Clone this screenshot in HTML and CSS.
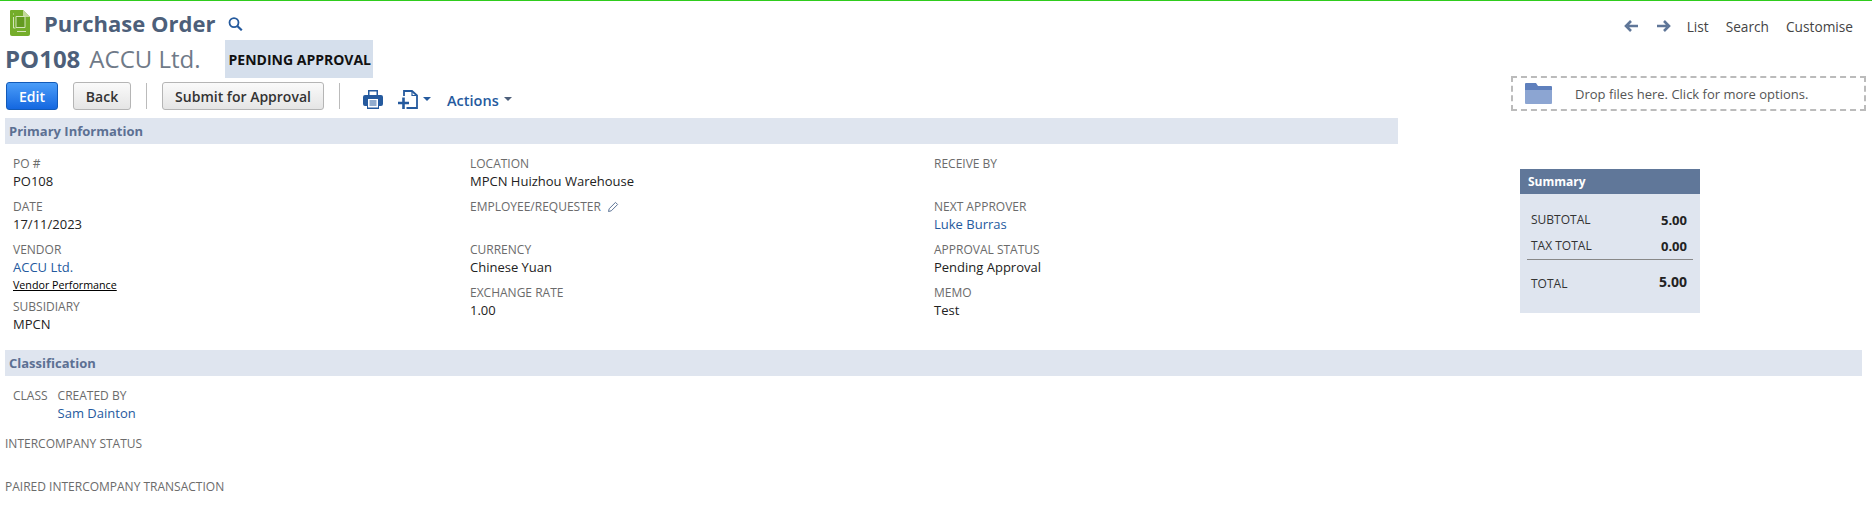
FILE: index.html
```html
<!DOCTYPE html>
<html lang="en">
<head>
  <meta charset="UTF-8">
  <title>Purchase Order</title>
  <link rel="stylesheet" href="styles.css">
</head>
<body>
  <div class="top">
    <div class="top-left">
      <div class="title-row">
        <svg class="record-icon" width="20" height="26" viewBox="0 0 20 26">
          <path d="M1 0h12l7 7v17a2 2 0 0 1-2 2H2a2 2 0 0 1-2-2V1a1 1 0 0 1 1-1z" fill="#74ad2a"/>
          <path d="M13 0l7 7h-7z" fill="#c3d99c"/>
          <path d="M6 6.500h9v11H6z" fill="#639a20" stroke="#d5e5bb" stroke-width="1"/>
          <path d="M3.500 7v11h2M7 21.500h9M3 4h1" stroke="#d5e5bb" stroke-width="1" fill="none"/>
        </svg>
        <h1 class="page-title">Purchase Order</h1>
        <svg class="search-icon" width="15" height="14" viewBox="0 0 15 14">
          <circle cx="6" cy="5.600" r="4.500" fill="none" stroke="#255a9e" stroke-width="1.800"/>
          <path d="M9.300 9l4.500 4.300" stroke="#255a9e" stroke-width="2.200"/>
        </svg>
      </div>
      <div class="record-row">
        <span class="record-id">PO108</span>
        <span class="record-name">ACCU Ltd.</span>
        <span class="badge">PENDING APPROVAL</span>
      </div>
      <div class="toolbar">
        <button class="btn btn-primary">Edit</button>
        <button class="btn btn-back">Back</button>
        <span class="sep"></span>
        <button class="btn btn-submit">Submit for Approval</button>
        <span class="sep"></span>
        <svg class="print-icon" width="20" height="19" viewBox="0 0 20 19">
          <path d="M5 0h10v5h3a2 2 0 0 1 2 2v7a2 2 0 0 1-2 2h-2v3H4v-3H2a2 2 0 0 1-2-2V7a2 2 0 0 1 2-2h3z" fill="#255a9e"/>
          <path d="M6.500 1.500h7V5h-7z" fill="#fff"/>
          <path d="M5 9h10v8.500H5z" fill="#fff"/>
          <path d="M6.500 11h7M6.500 13h7M6.500 15h7" stroke="#255a9e" stroke-width="1"/>
        </svg>
        <svg class="new-icon" width="20" height="19" viewBox="0 0 20 19">
          <path d="M6 6V1h8l5 4.500V18H8.500" fill="none" stroke="#255a9e" stroke-width="1.800"/>
          <path d="M14 1v4.500h5" fill="none" stroke="#255a9e" stroke-width="1.200"/>
          <path d="M0 13h11M5.500 7.500V19" stroke="#255a9e" stroke-width="2.600"/>
        </svg>
        <span class="caret caret-new"></span>
        <span class="actions">Actions</span>
        <span class="caret"></span>
      </div>
    </div>
    <div class="top-right">
      <nav class="top-nav">
        <svg width="15" height="12" viewBox="0 0 15 12"><path d="M14 6H4M7 1L2 6l5 5" fill="none" stroke="#5f7698" stroke-width="2.600"/></svg>
        <svg width="15" height="12" viewBox="0 0 15 12"><path d="M1 6h10M8 1l5 5-5 5" fill="none" stroke="#5f7698" stroke-width="2.600"/></svg>
        <a class="nav-link nav-list">List</a>
        <a class="nav-link">Search</a>
        <a class="nav-link">Customise</a>
      </nav>
      <div class="dropzone">
        <svg width="27" height="21" viewBox="0 0 27 21">
          <path d="M0 1a1 1 0 0 1 1-1h10l2 3h13a1 1 0 0 1 1 1v4H0z" fill="#5f80bd"/>
          <path d="M0 7h27v13a1 1 0 0 1-1 1H1a1 1 0 0 1-1-1z" fill="#8ca5d2"/>
        </svg>
        <span>Drop files here. Click for more options.</span>
      </div>
    </div>
  </div>

  <div class="primary">
    <section class="primary-main">
      <h2 class="section-head">Primary Information</h2>
      <div class="field-cols">
        <div class="col col-1">
          <div class="field"><div class="label">PO #</div><div class="value">PO108</div></div>
          <div class="field"><div class="label">Date</div><div class="value">17/11/2023</div></div>
          <div class="field field-vendor">
            <div class="label">Vendor</div>
            <div class="value link">ACCU Ltd.</div>
            <a class="perf-link">Vendor Performance</a>
          </div>
          <div class="field"><div class="label">Subsidiary</div><div class="value">MPCN</div></div>
        </div>
        <div class="col col-2">
          <div class="field"><div class="label">Location</div><div class="value">MPCN Huizhou Warehouse</div></div>
          <div class="field">
            <div class="label">Employee/Requester
              <svg class="pencil" width="12" height="12" viewBox="0 0 12 12"><path d="M1.500 10.500l.7-2.800L8.500 1.400l2.100 2.100-6.300 6.300z" fill="none" stroke="#5f7698" stroke-width="1"/></svg>
            </div>
            <div class="value"></div>
          </div>
          <div class="field"><div class="label">Currency</div><div class="value">Chinese Yuan</div></div>
          <div class="field"><div class="label">Exchange Rate</div><div class="value">1.00</div></div>
        </div>
        <div class="col">
          <div class="field"><div class="label">Receive By</div><div class="value"></div></div>
          <div class="field"><div class="label">Next Approver</div><div class="value link">Luke Burras</div></div>
          <div class="field"><div class="label">Approval Status</div><div class="value">Pending Approval</div></div>
          <div class="field"><div class="label">Memo</div><div class="value">Test</div></div>
        </div>
      </div>
    </section>
    <aside class="summary">
      <div class="summary-head">Summary</div>
      <div class="summary-body">
        <div class="sum-row"><span>SUBTOTAL</span><b>5.00</b></div>
        <div class="sum-row sum-tax"><span>TAX TOTAL</span><b>0.00</b></div>
        <div class="sum-row sum-total"><span>TOTAL</span><b>5.00</b></div>
      </div>
    </aside>
  </div>

  <section class="classification">
    <h2 class="section-head">Classification</h2>
    <div class="class-row">
      <div class="label">Class</div>
      <div>
        <div class="label">Created By</div>
        <div class="value link">Sam Dainton</div>
      </div>
    </div>
    <div class="label ic-status">Intercompany Status</div>
    <div class="label ic-paired">Paired Intercompany Transaction</div>
  </section>
</body>
</html>
```

FILE: styles.css
```css
html, body {
  margin: 0;
  padding: 0;
}

body {
  font-family: "Open Sans", sans-serif;
  font-size: 13px;
  color: #222;
  background-color: #fff;
  border-top: 1px solid #2fcc1d;
  height: 522px;
  overflow: hidden;
}

.top {
  display: flex;
  justify-content: space-between;
  height: 117px;
}

.top-left {
  padding-left: 6px;
}

.title-row {
  display: flex;
  align-items: center;
  height: 38px;
  padding-left: 4px;
}

.record-icon {
  margin-top: 6px;
}

.page-title {
  margin: 6px 0 0 14px;
  font-size: 22px;
  font-weight: 700;
  color: #4d5f7a;
}

.search-icon {
  margin: 7px 0 0 13px;
}

.record-row {
  display: flex;
  align-items: center;
  height: 39px;
}

.record-id {
  margin-left: -1px;
  font-size: 24px;
  font-weight: 700;
  color: #4d5f7a;
}

.record-name {
  margin-left: 9px;
  font-size: 24px;
  color: #6f7a88;
}

.badge {
  box-sizing: border-box;
  margin-left: 24px;
  width: 148px;
  height: 38px;
  padding-left: 4px;
  line-height: 39px;
  font-size: 14px;
  font-weight: 700;
  white-space: nowrap;
  color: #111;
  background-color: #d5dfec;
}

.toolbar {
  display: flex;
  align-items: center;
  height: 28px;
  margin-top: 4px;
}

.btn {
  height: 28px;
  padding: 0;
  font-family: inherit;
  font-size: 14px;
  font-weight: 600;
  color: #333;
  background: linear-gradient(#fafafa, #e5e5e5);
  border: 1px solid #b5b5b5;
  border-radius: 3px;
}

.btn-primary {
  width: 52px;
  color: #fff;
  background: linear-gradient(#4b9df8, #1467e0);
  border-color: #125ab8;
}

.btn-back {
  width: 58px;
  margin-left: 15px;
}

.btn-submit {
  width: 162px;
}

.sep {
  width: 1px;
  height: 26px;
  margin: 0 15px;
  background-color: #bbb;
}

.print-icon {
  margin: 6px 0 0 8px;
}

.new-icon {
  margin: 6px 0 0 15px;
}

.caret {
  width: 0;
  height: 0;
  margin: 6px 0 0 5px;
  border-left: 4px solid transparent;
  border-right: 4px solid transparent;
  border-top: 4px solid #4d5f7a;
}

.caret-new {
  border-top-color: #255a9e;
}

.actions {
  margin: 9px 0 0 16px;
  font-size: 14.500px;
  font-weight: 600;
  color: #255a9e;
}

.top-right {
  display: flex;
  flex-direction: column;
  align-items: flex-end;
  padding-right: 6px;
}

.top-nav {
  display: flex;
  align-items: center;
  gap: 17px;
  height: 50px;
  padding-right: 13px;
}

.nav-link {
  font-size: 13.700px;
  color: #444;
}

.nav-list {
  margin-left: -1px;
}

.dropzone {
  display: flex;
  align-items: center;
  box-sizing: border-box;
  width: 355px;
  height: 35px;
  margin-top: 25px;
  padding-left: 12px;
  border: 2px dashed #bbb;
  font-size: 13px;
  color: #555;
}

.dropzone span {
  margin-left: 23px;
}

.primary {
  display: flex;
  height: 232px;
}

.primary-main {
  width: 1393px;
  margin-left: 5px;
}

.section-head {
  height: 26px;
  margin: 0;
  padding-left: 4px;
  line-height: 26px;
  font-size: 13px;
  font-weight: 700;
  color: #5c7093;
  background-color: #dfe5ef;
}

.field-cols {
  display: flex;
  padding: 10px 0 0 8px;
}

.col-1 {
  width: 457px;
}

.col-2 {
  width: 464px;
}

.field {
  margin-bottom: 7px;
}

.field-vendor {
  margin-bottom: 3px;
}

.label {
  height: 18px;
  line-height: 20px;
  font-size: 12px;
  text-transform: uppercase;
  color: #6b6b6b;
}

.value {
  min-height: 18px;
  line-height: 18px;
  font-size: 13px;
  color: #222;
}

.link {
  color: #255a9e;
}

.perf-link {
  display: block;
  width: fit-content;
  line-height: 18px;
  height: 18px;
  font-size: 10.700px;
  color: #000;
  text-decoration: underline;
}

.pencil {
  margin-left: 3px;
  vertical-align: -2px;
}

.summary {
  align-self: flex-start;
  width: 180px;
  margin: 51px 0 0 122px;
  background-color: #dfe5ef;
}

.summary-head {
  height: 25px;
  padding-left: 8px;
  line-height: 25px;
  font-size: 12px;
  font-weight: 700;
  color: #fff;
  background-color: #607799;
}

.summary-body {
  height: 106px;
  padding: 0 7px;
}

.sum-row {
  display: flex;
  justify-content: space-between;
  padding: 0 6px 0 4px;
  height: 26px;
  line-height: 26px;
  font-size: 12px;
  color: #333;
}

.sum-row:first-child {
  margin-top: 13px;
}

.sum-row b {
  font-size: 13px;
  color: #222;
}

.sum-tax {
  border-bottom: 1px solid #888;
}

.sum-total {
  margin-top: 12px;
  line-height: 24px;
}

.sum-total b {
  font-size: 14px;
  line-height: 20px;
}

.classification {
  margin: 0 10px 0 5px;
}

.class-row {
  display: flex;
  gap: 10px;
  padding: 10px 0 0 8px;
}

.ic-status {
  margin: 12px 0 0;
}

.ic-paired {
  margin: 25px 0 0;
}
```
